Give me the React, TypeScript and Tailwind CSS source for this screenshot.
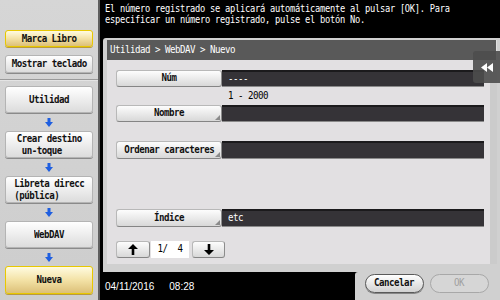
import React from "react";

const mono = "font-['DejaVu_Sans_Mono',monospace] text-[11px] tracking-[-0.6px]";

function T({ children, left }: { children: React.ReactNode; left?: boolean }) {
  return (
    <span className={`inline-block whitespace-nowrap scale-x-[0.83] ${left ? "origin-left" : "origin-center"}`}>
      {children}
    </span>
  );
}

function SideBtn({ children, yellow, h = "h-[27px]" }: { children: React.ReactNode; yellow?: boolean; h?: string }) {
  const base = yellow
    ? "bg-gradient-to-b from-[#fffbe0] via-[#f3e2a6] to-[#dcc078] border border-[#e8c800] shadow-[0_1px_0_#b89a40]"
    : "bg-gradient-to-b from-[#ffffff] to-[#dcdcdc] border border-[#b4b4b4] shadow-[0_1px_0_#8a8a8a]";
  return (
    <div className={`${h} ${base} rounded-[3px] flex items-center justify-center text-center leading-[12px] text-[#111] font-bold ${mono}`}>
      {children}
    </div>
  );
}

function BlueArrow() {
  return (
    <div className="h-[18px] flex items-center justify-center">
      <svg width="8" height="9" viewBox="0 0 8 9">
        <rect x="2.5" y="0" width="3" height="4" fill="#1f5fe0" />
        <polygon points="0,4 8,4 4,9" fill="#1f5fe0" />
      </svg>
    </div>
  );
}

function LabelBtn({ children, tri = true, h = "h-[17px]" }: { children: React.ReactNode; tri?: boolean; h?: string }) {
  return (
    <div className={`relative w-[106px] ${h} shrink-0 bg-gradient-to-b from-[#fdfdfd] to-[#d8d8d8] border border-[#b8b8b8] border-b-[#858585] border-r-[#8c8c8c] rounded-[3px] flex items-center justify-center text-[#111] font-bold ${mono}`}>
      <T>{children}</T>
      {tri && (
        <svg className="absolute right-[1px] bottom-[1px]" width="5" height="5" viewBox="0 0 5 5">
          <polygon points="5,0 5,5 0,5" fill="#8a8a8a" />
        </svg>
      )}
    </div>
  );
}

function Field({ children, h = "h-[17px]" }: { children?: React.ReactNode; h?: string }) {
  return (
    <div className={`flex-1 min-w-0 ${h} bg-[#353337] border-t-2 border-[#1b1a1c] border-b border-b-[#8a8a8a] flex items-center pl-[6px] text-white ${mono}`}>
      {children && <T left>{children}</T>}
    </div>
  );
}

const btnGrad =
  "bg-gradient-to-b from-[#fdfdfd] to-[#d8d8d8] border border-[#b8b8b8] border-b-[#858585] border-r-[#8c8c8c] rounded-[3px] flex items-center justify-center";

export default function App() {
  return (
    <div className="relative w-[500px] h-[300px] flex overflow-hidden bg-black">
      {/* Sidebar */}
      <aside className="w-[100px] shrink-0 h-full bg-gradient-to-b from-[#d6d6d6] to-[#cdcdcd] border-r-2 border-[#5e5e5e] flex flex-col px-[5px] pt-[30px]">
        <SideBtn yellow h="h-[17px]"><T>Marca Libro</T></SideBtn>
        <div className="mt-[8px]">
          <SideBtn h="h-[18px]"><T>Mostrar teclado</T></SideBtn>
        </div>
        <div className="-mx-[5px] mt-[6px] h-[2px] border-t border-[#9a9a9a] bg-[#e4e4e4]" />
        <div className="mt-[5px]">
          <SideBtn><T>Utilidad</T></SideBtn>
        </div>
        <BlueArrow />
        <SideBtn>
          <T><span className="block text-left">Crear destino<br />&nbsp;un-toque</span></T>
        </SideBtn>
        <BlueArrow />
        <SideBtn>
          <T><span className="block text-left">Libreta direcc<br />(pública)</span></T>
        </SideBtn>
        <BlueArrow />
        <SideBtn><T>WebDAV</T></SideBtn>
        <BlueArrow />
        <SideBtn yellow h="h-[28px]"><T>Nueva</T></SideBtn>
      </aside>

      {/* Main column */}
      <div className="w-[400px] min-w-0 shrink-0 h-full flex flex-col bg-black">
        <div className="h-[38px] w-[400px] overflow-hidden pl-[5px] pt-[3px] text-white font-['DejaVu_Sans_Mono',monospace] text-[10.5px] tracking-[-0.3px]">
          <div className="h-[11px] leading-[11px]"><T left>El número registrado se aplicará automáticamente al pulsar [OK]. Para</T></div>
          <div className="h-[11px] leading-[11px]"><T left>especificar un número registrado, pulse el botón No.</T></div>
        </div>

        <div className="ml-[3px] h-[234px] bg-[#d0d0d0] rounded-tl-[3px] pt-[2px] pl-[4px] pr-[3px] pb-[8px] flex flex-col">
          <div className={`h-[20px] bg-[#595959] text-white flex items-center pl-[3px] border-r border-[#e0e0e0] ${mono}`}>
            <T left>Utilidad &gt; WebDAV &gt; Nuevo</T>
          </div>
          <div className="flex-1 flex min-w-0">
            <div className="flex-1 min-w-0 bg-[#e2e0e2] pl-[9px] pr-[6px] pt-[10px] flex flex-col">
              <div className="flex">
                <LabelBtn tri={false}>Núm</LabelBtn>
                <Field>----</Field>
              </div>
              <div className={`h-[18px] pl-[112px] flex items-center text-black ${mono}`}><T left>1 - 2000</T></div>
              <div className="flex">
                <LabelBtn>Nombre</LabelBtn>
                <Field />
              </div>
              <div className="flex mt-[19px]">
                <LabelBtn h="h-[18px]">Ordenar caracteres</LabelBtn>
                <Field h="h-[18px]" />
              </div>
              <div className="flex mt-[50px]">
                <LabelBtn h="h-[18px]">Índice</LabelBtn>
                <Field h="h-[18px]">etc</Field>
              </div>
              <div className="flex mt-[14px] items-center">
                <div className={`w-[34px] h-[17px] ${btnGrad}`}>
                  <svg width="10" height="11" viewBox="0 0 10 11">
                    <polygon points="5,0 10,5 6.3,5 6.3,11 3.7,11 3.7,5 0,5" fill="#000" />
                  </svg>
                </div>
                <div className={`w-[38px] h-[17px] ml-[1px] bg-white flex items-center justify-center text-black ${mono}`}>
                  <T>1/&nbsp;&nbsp;4</T>
                </div>
                <div className={`w-[33px] h-[17px] ml-[3px] ${btnGrad}`}>
                  <svg width="10" height="11" viewBox="0 0 10 11">
                    <polygon points="5,11 10,6 6.3,6 6.3,0 3.7,0 3.7,6 0,6" fill="#000" />
                  </svg>
                </div>
              </div>
            </div>
            <div className="w-[7px] shrink-0 bg-[#cbcbcb]" />
          </div>
        </div>

        <div className="flex-1 flex">
          <div className="flex-1 bg-black text-white font-['Liberation_Sans',sans-serif] text-[10px] flex items-center pl-[5px] pt-[1px]">
            <span>04/11/2016</span>
            <span className="ml-[15px]">08:28</span>
          </div>
          <div className="w-[145px] shrink-0 bg-[#d0d0d0] rounded-tl-[3px] flex items-start pt-[2px] pl-[10px] gap-[6px]">
            <div className={`w-[59px] h-[19px] rounded-full border border-[#5a5a5a] bg-gradient-to-b from-[#ffffff] to-[#d2d2d2] shadow-[0_1px_0_#888] flex items-center justify-center text-[#111] font-bold ${mono}`}>
              <T>Cancelar</T>
            </div>
            <div className={`w-[59px] h-[19px] rounded-full border border-[#a8a8a8] bg-[#d6d6d6] flex items-center justify-center text-[#a0a0a0] ${mono}`}>
              <T>OK</T>
            </div>
          </div>
        </div>
      </div>

      {/* Side tab overlay */}
      <div className="absolute left-[473px] top-[51px] w-[27px] h-[32px] bg-[#4c4c4c]/90 rounded-l-[3px] flex items-center justify-center">
        <svg width="12" height="9" viewBox="0 0 12 9">
          <polygon points="0,4.5 6,0 6,9" fill="#fff" />
          <polygon points="6,4.5 12,0 12,9" fill="#fff" />
        </svg>
      </div>
    </div>
  );
}
